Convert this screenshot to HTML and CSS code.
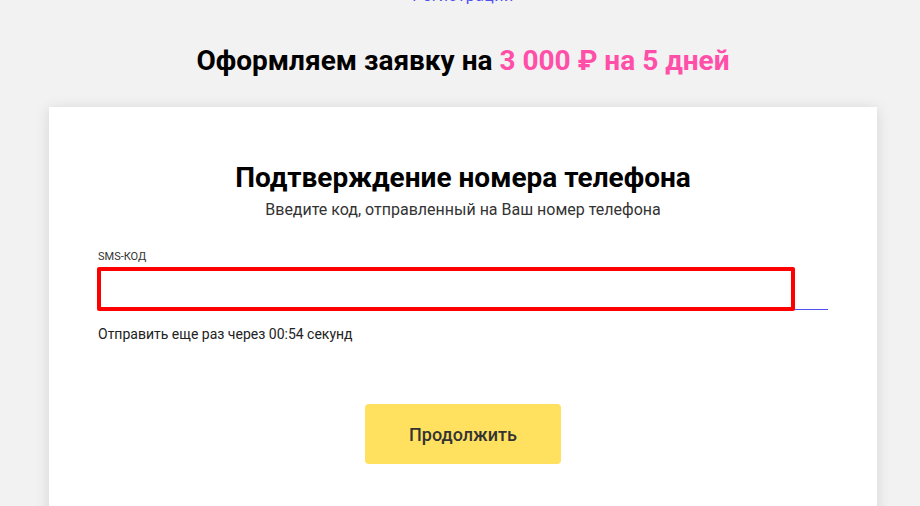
FILE: index.html
```html
<!DOCTYPE html>
<html lang="ru">
<head>
	<meta charset="UTF-8">
	<meta name="viewport" content="width=device-width">
	<title>Подтверждение номера телефона</title>
	<link rel="stylesheet" href="styles.css">
</head>
<body>
<main class="page">

	<a href="#" class="top-link">Регистрации</a>

	<h1 class="offer">Оформляем заявку на <span class="accent">3 000 ₽ на 5 дней</span></h1>

	<section class="card">
		<h2 class="card-title">Подтверждение номера телефона</h2>
		<p class="card-sub">Введите код, отправленный на Ваш номер телефона</p>

		<label class="field">
			<span class="field-label">SMS-КОД</span>
			<span class="field-box">
				<input type="text" class="field-input" inputmode="numeric">
				<span class="highlight"></span>
			</span>
		</label>

		<p class="resend">Отправить еще раз через 00:54 секунд</p>

		<div class="actions">
			<button type="button" class="btn">Продолжить</button>
		</div>
	</section>

</main>
</body>
</html>
```

FILE: styles.css
```css
html, body {
	margin: 0;
	background: #f2f2f2;
	font-family: Roboto, "Liberation Sans", sans-serif;
	color: #000;
}

.page {
	display: flex;
	flex-direction: column;
	align-items: center;
	overflow: hidden;
	height: 506px;
	padding-left: 6px;
}

.top-link {
	margin-top: -12px;
	font-size: 16px;
	line-height: 16px;
	letter-spacing: 0.5px;
	color: #5050f0;
	text-decoration: none;
}

.offer {
	margin: 40px 0 0;
	font-size: 28px;
	line-height: 34px;
	font-weight: 700;
}

.offer .accent {
	color: #ff4fa8;
}

.card {
	box-sizing: border-box;
	width: 828px;
	margin-top: 29px;
	padding: 54px 49px 60px;
	background: #fff;
	box-shadow: 0 2px 14px rgba(0, 0, 0, 0.12);
}

.card-title {
	margin: 0;
	text-align: center;
	font-size: 28px;
	line-height: 34px;
	font-weight: 700;
}

.card-sub {
	margin: 5px 0 0;
	text-align: center;
	font-size: 16px;
	line-height: 20px;
	color: #333;
}

.field {
	display: block;
	margin-top: 31px;
}

.field-label {
	display: block;
	font-size: 11px;
	line-height: 12px;
	color: #333;
}

.field-box {
	position: relative;
	display: block;
	margin-top: 5px;
}

.field-input {
	box-sizing: border-box;
	display: block;
	width: 100%;
	height: 42px;
	border: 0;
	border-bottom: 1px solid #5050ee;
	background: transparent;
	font: inherit;
	outline: none;
}

/* red marker drawn over the input */
.highlight {
	position: absolute;
	left: -1px;
	top: -1px;
	width: 698px;
	height: 44px;
	box-sizing: border-box;
	border: 4px solid #ff0000;
	border-radius: 2px;
	pointer-events: none;
}

.resend {
	margin: 15px 0 0;
	font-size: 14px;
	line-height: 18px;
	color: #222;
}

.actions {
	display: flex;
	justify-content: center;
	margin-top: 61px;
}

.btn {
	width: 196px;
	height: 60px;
	border: 0;
	border-radius: 4px;
	background: #ffe05f;
	font-family: Roboto, "Liberation Sans", sans-serif;
	font-size: 18px;
	font-weight: 500;
	color: #333;
	cursor: pointer;
}
```
